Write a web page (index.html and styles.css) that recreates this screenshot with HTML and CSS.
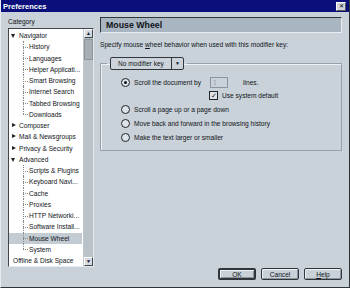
FILE: index.html
```html
<!DOCTYPE html>
<html lang="en">
<head>
  <meta charset="UTF-8">
  <title>Preferences</title>
  <link rel="stylesheet" href="styles.css">
</head>
<body>
  <div class="window">
    <div class="titlebar">
      <span class="title">Preferences</span>
      <span class="close">&#x2715;</span>
    </div>

    <div class="main">
      <!-- カテゴリツリー -->
      <div class="left">
        <div class="cat-label">Category</div>
        <div class="tree-box">
          <ul class="tree">
            <li class="top open">Navigator</li>
            <li class="child">History</li>
            <li class="child">Languages</li>
            <li class="child">Helper Applicati...</li>
            <li class="child">Smart Browsing</li>
            <li class="child">Internet Search</li>
            <li class="child">Tabbed Browsing</li>
            <li class="child last">Downloads</li>
            <li class="top">Composer</li>
            <li class="top">Mail &amp; Newsgroups</li>
            <li class="top">Privacy &amp; Security</li>
            <li class="top open">Advanced</li>
            <li class="child">Scripts &amp; Plugins</li>
            <li class="child">Keyboard Navi...</li>
            <li class="child">Cache</li>
            <li class="child">Proxies</li>
            <li class="child">HTTP Networki...</li>
            <li class="child">Software Install...</li>
            <li class="child selected">Mouse Wheel</li>
            <li class="child last">System</li>
            <li class="plain">Offline &amp; Disk Space</li>
          </ul>
          <div class="scrollbar">
            <div class="sb-btn">&#9650;</div>
            <div class="sb-track"><div class="sb-thumb"></div></div>
            <div class="sb-btn down">&#9660;</div>
          </div>
        </div>
      </div>

      <!-- 設定パネル -->
      <div class="right">
        <div class="panel-header">Mouse Wheel</div>
        <p class="desc">Specify mouse <u>w</u>heel behavior when used with this modifier key:</p>
        <fieldset class="group">
          <legend><span class="dropdown"><span class="dd-label">No modifier key</span><span class="dd-arrow">&#9660;</span></span></legend>
          <div class="option">
            <span class="radio checked"></span>
            <span>Scroll the document by</span>
            <span class="num-input">1</span>
            <span>lines.</span>
          </div>
          <div class="sub-option">
            <span class="checkbox">&#10003;</span>
            <span>Use system default</span>
          </div>
          <div class="option"><span class="radio"></span><span>Scroll a page up or a page down</span></div>
          <div class="option"><span class="radio"></span><span>Move back and forward in the browsing history</span></div>
          <div class="option"><span class="radio"></span><span>Make the text larger or smaller</span></div>
        </fieldset>
      </div>
    </div>

    <div class="footer">
      <button class="btn default">OK</button>
      <button class="btn">Cancel</button>
      <button class="btn"><u>H</u>elp</button>
    </div>
  </div>
</body>
</html>
```

FILE: styles.css
```css
body {
  margin: 0;
  font-family: 'Liberation Sans', Arial, sans-serif;
  font-size: 6.6px;
  color: #101418;
  background: #c9d1d9;
}
.window {
  width: 350px;
  height: 288px;
  box-sizing: border-box;
  border-left: 1px solid #e8ecf0;
  border-bottom: 1px solid #303438;
  border-right: 1px solid #303438;
  background: #c9d1d9;
  display: flex;
  flex-direction: column;
}
.titlebar {
  height: 12px;
  background: #0a0f7c;
  color: #fff;
  display: flex;
  align-items: center;
  justify-content: space-between;
  padding: 0 3px 0 2px;
}
.title {
  font-weight: bold;
  font-size: 7.6px;
}
.close {
  width: 8px;
  height: 7px;
  background: #d0d6dc;
  color: #000;
  font-size: 6px;
  line-height: 7px;
  text-align: center;
  border: 1px solid #555;
  border-top-color: #fff;
  border-left-color: #fff;
}
.main {
  display: flex;
  flex: 1;
  padding: 5px 0 0 7px;
  gap: 6px;
}
.left {
  width: 86px;
  display: flex;
  flex-direction: column;
}
.cat-label {
  height: 11px;
  line-height: 10px;
}
.tree-box {
  display: flex;
  height: 237px;
  border: 1px solid #40464c;
  border-right-color: #e6eaee;
  border-bottom-color: #e6eaee;
  background: #fff;
}
.tree {
  list-style: none;
  margin: 0;
  padding: 1px 0 0 0;
  flex: 1;
}
.tree li {
  height: 11.25px;
  line-height: 11.25px;
  white-space: nowrap;
  position: relative;
}
.tree .top {
  padding-left: 10px;
}
.tree .top::before {
  content: "";
  position: absolute;
  left: 3px;
  top: 3px;
  border-top: 2.5px solid transparent;
  border-bottom: 2.5px solid transparent;
  border-left: 4px solid #222;
}
.tree .top.open::before {
  left: 2px;
  top: 4px;
  border-left: 2.5px solid transparent;
  border-right: 2.5px solid transparent;
  border-top: 4px solid #222;
  border-bottom: 0;
}
.tree .child {
  padding-left: 20px;
}
.tree .child::before {
  content: "";
  position: absolute;
  left: 14px;
  top: 0;
  height: 100%;
  border-left: 1px dotted #888;
}
.tree .child.last::before {
  height: 50%;
}
.tree .child::after {
  content: "";
  position: absolute;
  left: 14px;
  top: 50%;
  width: 5px;
  border-top: 1px dotted #888;
}
.tree .selected {
  background: #c3cbd3;
  margin-right: 1px;
}
.tree .plain {
  padding-left: 4px;
}
.scrollbar {
  width: 9px;
  display: flex;
  flex-direction: column;
  border-left: 1px solid #c0c6cc;
}
.sb-btn {
  height: 9px;
  background: #d4dae0;
  border: 1px solid #40464c;
  border-top-color: #fff;
  border-left-color: #fff;
  box-sizing: border-box;
  font-size: 5px;
  line-height: 7px;
  text-align: center;
}
.sb-track {
  flex: 1;
  background: #b9c1c9;
}
.sb-thumb {
  height: 19px;
  margin-top: 1px;
  background: #a6aeb6;
  border: 1px solid #8c949c;
}
.right {
  width: 242px;
}
.panel-header {
  height: 14px;
  line-height: 14px;
  background: #a9b5c1;
  border: 1px solid #30363c;
  border-right-color: #e8ecf0;
  border-bottom-color: #e8ecf0;
  padding-left: 5px;
  font-weight: bold;
  font-size: 8.8px;
}
.desc {
  margin: 8px 0 9px 0;
}
.group {
  margin: 0;
  padding: 5px 0 6px 20px;
  border: 1px solid #98a0a8;
  box-shadow: inset 1px 1px 0 #eef2f6;
}
.group legend {
  padding: 0 3px;
  margin-left: -14px;
}
.dropdown {
  display: flex;
  width: 74px;
  height: 13px;
  border: 1px solid #30363c;
  border-radius: 2px;
  background: #ccd3da;
  box-sizing: border-box;
  font-size: 6.6px;
}
.dd-label {
  flex: 1;
  text-align: center;
  line-height: 11px;
  border-right: 1px solid #30363c;
}
.dd-arrow {
  width: 11px;
  text-align: center;
  font-size: 5px;
  line-height: 11px;
}
.option {
  display: flex;
  align-items: center;
  height: 14px;
  gap: 4px;
}
.radio {
  width: 7px;
  height: 7px;
  border: 1px solid #202428;
  border-radius: 50%;
  background: #dfe4e9;
  position: relative;
}
.radio.checked::after {
  content: "";
  position: absolute;
  left: 2px;
  top: 2px;
  width: 3px;
  height: 3px;
  border-radius: 50%;
  background: #101418;
}
.num-input {
  width: 14px;
  height: 9px;
  margin: 0 11px 0 5px;
  border: 1px solid #8c949c;
  background: #c9d1d9;
  color: #9aa2aa;
  padding-left: 2px;
  line-height: 9px;
}
.sub-option {
  display: flex;
  align-items: center;
  gap: 4px;
  height: 13px;
  padding-left: 88px;
}
.checkbox {
  width: 7px;
  height: 7px;
  border: 1px solid #202428;
  background: #dfe4e9;
  font-size: 7px;
  line-height: 7px;
  text-align: center;
}
.footer {
  display: flex;
  justify-content: flex-end;
  gap: 5px;
  padding: 0 7px 7px 0;
}
.btn {
  width: 38px;
  height: 12px;
  padding: 0;
  font-family: inherit;
  font-size: 6.6px;
  color: #101418;
  background: #c9d1d9;
  border: 1px solid #30363c;
  border-radius: 2px;
  box-shadow: inset 1px 1px 0 #eef2f6, inset -1px -1px 0 #8c949c;
}
.btn.default {
  border-width: 2px;
}
```
